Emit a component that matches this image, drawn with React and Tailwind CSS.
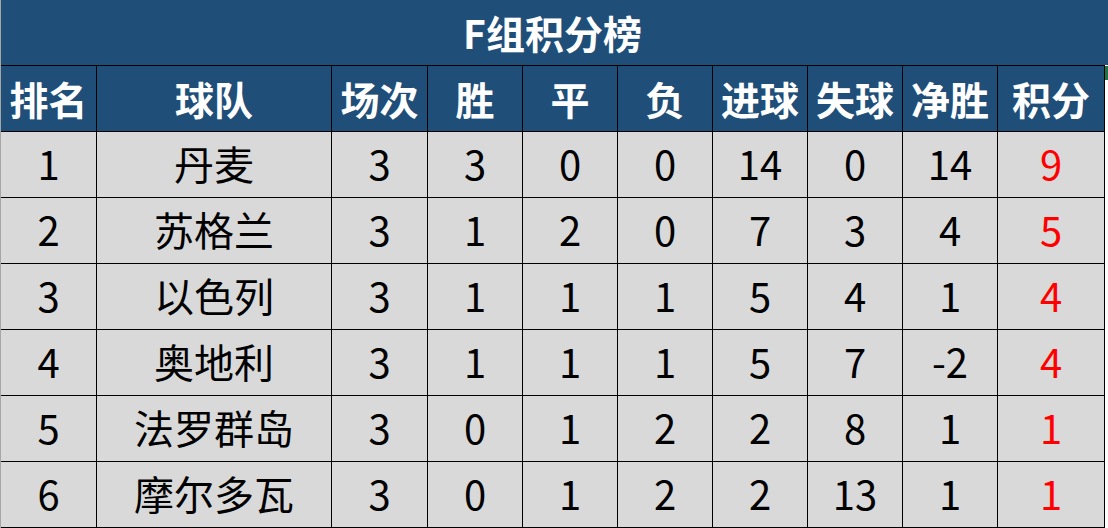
const cols = ["w-[96px]", "w-[235px]", "w-[96px]", "w-[95px]", "w-[95px]", "w-[95px]", "w-[95px]", "w-[95px]", "w-[95px]", "w-[107px]"];

const headers = ["排名", "球队", "场次", "胜", "平", "负", "进球", "失球", "净胜", "积分"];

const rows = [
  ["1", "丹麦", "3", "3", "0", "0", "14", "0", "14", "9"],
  ["2", "苏格兰", "3", "1", "2", "0", "7", "3", "4", "5"],
  ["3", "以色列", "3", "1", "1", "1", "5", "4", "1", "4"],
  ["4", "奥地利", "3", "1", "1", "1", "5", "7", "-2", "4"],
  ["5", "法罗群岛", "3", "0", "1", "2", "2", "8", "1", "1"],
  ["6", "摩尔多瓦", "3", "0", "1", "2", "2", "13", "1", "1"],
];

export default function App() {
  return (
    <div
      className="w-[1108px] h-[528px] bg-white overflow-hidden"
      style={{ fontFamily: '"Noto Sans CJK SC", "Noto Sans", sans-serif' }}
    >
      {/* TITLE */}
      <div className="h-[65px] bg-[#1f4e79] border-l border-[#a6a6a6] flex items-center justify-center pr-[4px]">
        <span className="text-white font-bold text-[39px] leading-none">F组积分榜</span>
      </div>

      <div className="flex">
        <div className="w-px bg-[#a6a6a6]" />
        <div className="w-[1104px]">
          {/* HEADER */}
          <div className="flex h-[66px] border-t border-black bg-[#1f4e79]">
            {headers.map((h, i) => (
              <div
                key={i}
                className={`${cols[i]} border-r border-black flex items-center justify-center text-white font-bold text-[39px] leading-none`}
              >
                {h}
              </div>
            ))}
          </div>

          {/* ROWS */}
          {rows.map((r, ri) => (
            <div
              key={ri}
              className={`flex h-[66px] border-t border-black bg-[#d9d9d9] ${ri === rows.length - 1 ? "h-[67px] border-b" : ""}`}
            >
              {r.map((c, ci) => (
                <div
                  key={ci}
                  className={`${cols[ci]} border-r border-black flex items-center justify-center text-[40px] leading-none pb-[3px] ${ci === 9 ? "text-[#ff0000]" : "text-black"}`}
                >
                  {c}
                </div>
              ))}
            </div>
          ))}
        </div>
        <div className="flex-1 relative">
          <div className="absolute left-0 top-px w-[3px] h-[14px] bg-[#217346]" />
        </div>
      </div>
    </div>
  );
}
